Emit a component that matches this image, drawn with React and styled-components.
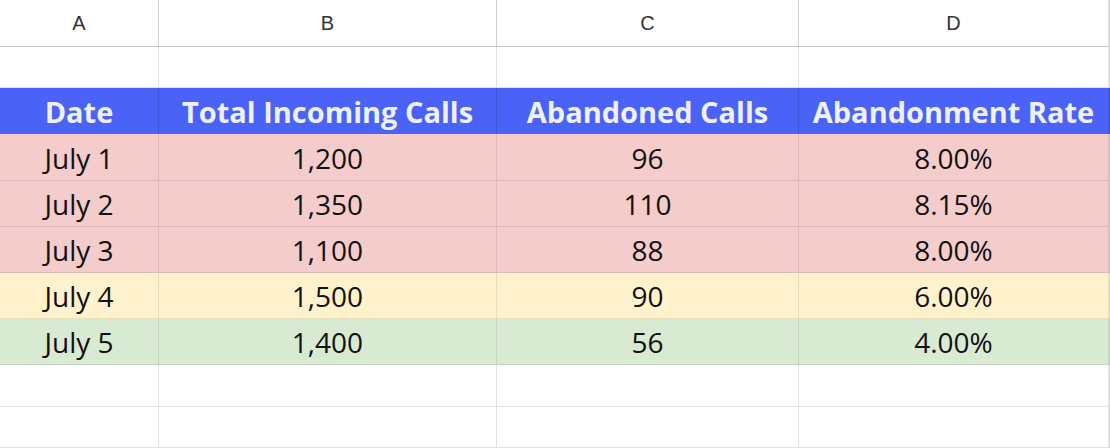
import React from "react";
import styled, { createGlobalStyle } from "styled-components";

const Global = createGlobalStyle`
  html, body { margin: 0; padding: 0; background: #fff; }
  body { width: 1110px; height: 448px; overflow: hidden; }
`;

const Sheet = styled.div`
  display: grid;
  grid-template-columns: 159px 338px 302px 311px;
  grid-template-rows: 47px 41px 46px 47px 46px 46px 46px 46px 42px 41px;
  width: 1110px;
  height: 448px;
  font-family: "Open Sans", "Noto Sans", sans-serif;
`;

const ColHead = styled.div`
  display: flex;
  align-items: center;
  justify-content: center;
  box-sizing: border-box;
  border-bottom: 1px solid #c4c4c4;
  border-right: ${(p) => (p.$last ? "2px solid #dcdcdc" : "1px solid #cfcfcf")};
  font-family: "Liberation Sans", Arial, sans-serif;
  font-size: 20px;
  line-height: 1;
  color: #333;
  background: #fff;
`;

const Cell = styled.div`
  display: flex;
  align-items: center;
  justify-content: center;
  box-sizing: border-box;
  border-bottom: 1px solid ${(p) => (p.$bg ? "rgba(0,0,0,0.09)" : "#e1e1e1")};
  border-right: ${(p) => (p.$last ? "2px" : "1px")} solid
    ${(p) => (p.$bg ? "rgba(0,0,0,0.09)" : "#e1e1e1")};
  background: ${(p) => p.$bg || "#fff"};
  font-size: 28px;
  color: #111;
  padding-top: 1px;
`;

const HeadCell = styled.div`
  display: flex;
  align-items: center;
  justify-content: center;
  box-sizing: border-box;
  background: #4b62f6;
  border-right: ${(p) => (p.$last ? "2px" : "1px")} solid rgba(0, 0, 40, 0.12);
  font-weight: 700;
  font-size: 29px;
  color: #eef0fb;
  white-space: nowrap;
`;

const COLORS = { red: "#f4cccc", yellow: "#fff2cc", green: "#d9ead3" };

const rows = [
  ["July 1", "1,200", "96", "8.00%", "red"],
  ["July 2", "1,350", "110", "8.15%", "red"],
  ["July 3", "1,100", "88", "8.00%", "red"],
  ["July 4", "1,500", "90", "6.00%", "yellow"],
  ["July 5", "1,400", "56", "4.00%", "green"],
];

const letters = ["A", "B", "C", "D"];
const headers = ["Date", "Total Incoming Calls", "Abandoned Calls", "Abandonment Rate"];

export default function App() {
  return (
    <>
      <Global />
      <Sheet>
        {letters.map((l, i) => (
          <ColHead key={l} $last={i === 3}>{l}</ColHead>
        ))}
        {letters.map((l, i) => (
          <Cell key={"e1" + l} $last={i === 3} />
        ))}
        {headers.map((h, i) => (
          <HeadCell key={h} $last={i === 3}>{h}</HeadCell>
        ))}
        {rows.map((r) =>
          r.slice(0, 4).map((v, i) => (
            <Cell key={r[0] + i} $bg={COLORS[r[4]]} $last={i === 3}>
              {v}
            </Cell>
          ))
        )}
        {[0, 1].map((k) =>
          letters.map((l, i) => <Cell key={"f" + k + l} $last={i === 3} />)
        )}
      </Sheet>
    </>
  );
}
